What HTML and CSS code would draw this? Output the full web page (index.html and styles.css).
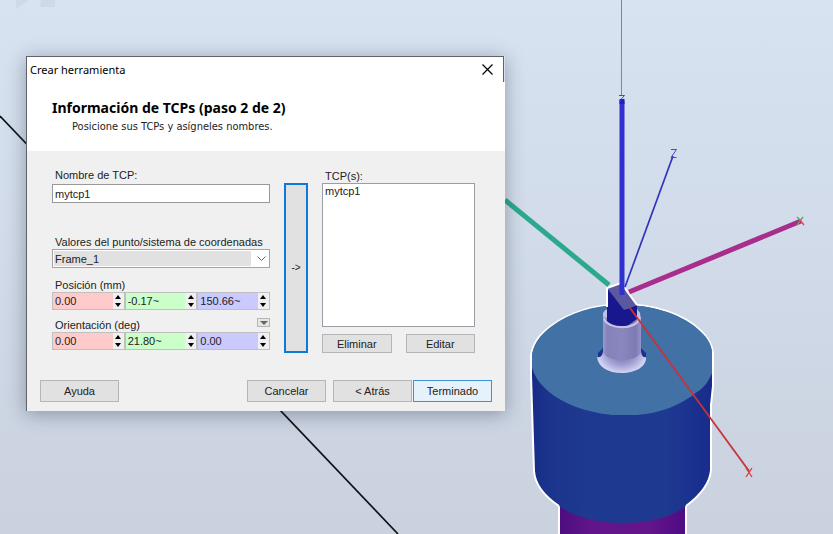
FILE: index.html
```html
<!DOCTYPE html>
<html lang="es">
<head>
<meta charset="utf-8">
<title>Crear herramienta</title>
<link rel="stylesheet" href="styles.css">
</head>
<body>
<main class="viewport">
  <svg class="scene" viewBox="0 0 833 534" preserveAspectRatio="xMinYMin slice" aria-hidden="true">
    <defs>
      <linearGradient id="body" x1="0" x2="1" y1="0" y2="0">
        <stop offset="0" stop-color="#172a86"/><stop offset=".08" stop-color="#1b338c"/><stop offset=".3" stop-color="#1e3990"/>
        <stop offset=".75" stop-color="#1e3990"/><stop offset="1" stop-color="#182b8c"/>
      </linearGradient>
      <linearGradient id="base" x1="0" x2="1" y1="0" y2="0">
        <stop offset="0" stop-color="#4c0d7e"/><stop offset=".25" stop-color="#62158a"/>
        <stop offset=".7" stop-color="#65158a"/><stop offset="1" stop-color="#4d0c84"/>
      </linearGradient>
      <linearGradient id="neck" x1="0" x2="1" y1="0" y2="0">
        <stop offset="0" stop-color="#9a98cb"/><stop offset=".12" stop-color="#8482b8"/><stop offset=".5" stop-color="#8987bd"/>
        <stop offset=".85" stop-color="#7d7bb2"/><stop offset="1" stop-color="#9694c8"/>
      </linearGradient>
      <radialGradient id="flare" gradientUnits="userSpaceOnUse" cx="0" cy="0" r="1" gradientTransform="translate(622 352) scale(25 21)">
        <stop offset=".4" stop-color="#8987bd"/><stop offset=".7" stop-color="#aaa8d8"/><stop offset="1" stop-color="#d3d2f4"/>
      </radialGradient>
    </defs>
    <path d="M16 0h13L16 9zM41 0h14v7H40z" fill="#cbd6e3" opacity=".7"/>
    <path d="M0 116L398 534" stroke="#101316" stroke-width="1.7"/>
    <path d="M621 0H622V96H621z" fill="#747de6"/>

    <path d="M559 504V536H686V504z" fill="url(#base)" stroke="#fff" stroke-width="2"/>
    <path d="M531 355C533 343 539 335 551 326C569 313 592 305 622 304C655 304 685 315 701 331C709 339 712 346 713 354V386L711 405V470C710 483 702 494 686 506C670 518 648 523 622 523C596 523 575 517 559 506C544 496 535 484 534 471L533 440L531 385z" fill="url(#body)"/>
    <path d="M559 506C544 496 535 484 534 471L533 440L531 375V355C533 343 539 335 551 326C569 313 592 305 622 304C655 304 685 315 701 331C709 339 713 346 713 354V386L711 405V470C710 483 702 494 686 506" fill="none" stroke="#fff" stroke-width="2"/>
    <path d="M532 355C534 343 540 335 552 326C570 313 592 305 622 305C655 305 684 315 700 331C709 339 712 346 712 354V373C708 382 704 388 697 392C681 405 661 413 637 415H612C585 412 563 404 548 391C540 384 534 376 532 367z" fill="#4171a5"/>

    <path d="M603 348L598 353V358L605 361zM641 348L646 353V358L637 361z" fill="#1c318d"/>
    <path d="M597 357C601 358 603 355 603 350H641C641 355 643 358 646 357C647 366 636 373 622 373C608 373 598 367 597 357z" fill="url(#flare)"/>
    <path d="M603 316C602 309 611 306 622 306C634 306 642 311 641 319V353Q636 360 622 360Q608 360 603 353z" fill="url(#neck)"/>
    <path d="M604 318C606 330 638 331 640 317" fill="none" stroke="#c5c4eb" stroke-width="2"/>
    <path d="M603 317V314Q603 311 608 309V318zM637 309L640 313V320L637 322z" fill="#c0bfe7"/>
    <path d="M607 288L627 309L637 305V319C628 325 630 326 622 326Q612 326 607 321z" fill="#19178e"/>
    <path d="M607 288L621 283L637 305L624 310z" fill="#5a58a1"/>
    <path d="M607 307V288L621 283L637 305" fill="none" stroke="#fff" stroke-width="2"/>

    <path d="M505 200L609 285" stroke="#2ca98c" stroke-width="5"/>
    <path d="M629 292L801 221" stroke="#a92d8d" stroke-width="5"/>
    <path d="M625 287L673 156" stroke="#3333bc" stroke-width="1.7"/>
    <path d="M622 101V295" stroke="#302fd0" stroke-width="5"/>
    <path d="M619.500 99H624.500V104H619.500z" fill="#2020c0"/>
    <path d="M619 95.500H624.500L619.500 101" fill="none" stroke="#4046e8" stroke-width="1"/>
    <path d="M671 149.500H676.500L671 157.500H676.500" fill="none" stroke="#4046e8" stroke-width="1"/>
    <path d="M630 308L749 471" stroke="#c83238" stroke-width="1.8"/>
    <path d="M746 468L752 477M752 468L746 477" stroke="#e42c38" stroke-width="1.2"/>
    <path d="M797 217L800 220M803 217L800 221L797 225" fill="none" stroke="#57a957" stroke-width="1.3"/>
    <path d="M800 220L804 225" stroke="#dd453f" stroke-width="1.3"/>
  </svg>

  <section class="dialog" role="dialog" aria-labelledby="dialog-title">
    <header class="titlebar">
      <span id="dialog-title">Crear herramienta</span>
      <button class="close" type="button" aria-label="Cerrar">
        <svg viewBox="0 0 11 11" width="11" height="11"><path d="M.5.5l10 10M10.500.5l-10 10" stroke="#000" stroke-width="1.200"/></svg>
      </button>
    </header>
    <div class="intro">
      <h1>Información de TCPs (paso 2 de 2)</h1>
      <p>Posicione sus TCPs y asígneles nombres.</p>
    </div>
    <form class="form">
      <div class="columns">
        <div class="values">
          <div class="field name">
            <label for="tcp-name">Nombre de TCP:</label>
            <input id="tcp-name" class="textbox" type="text" value="mytcp1">
          </div>
          <div class="field frame">
            <label for="frame">Valores del punto/sistema de coordenadas</label>
            <div class="combo">
              <select id="frame"><option>Frame_1</option></select>
              <svg class="chevron" viewBox="0 0 9 5" width="9" height="5"><path d="M.5.5l4 4 4-4" fill="none" stroke="#666"/></svg>
            </div>
          </div>
          <div class="field position" role="group" aria-labelledby="position-label">
            <span id="position-label" class="label">Posición (mm)</span>
            <div class="triple">
              <div class="spin x"><input type="text" aria-label="X" value="0.00"><span class="steps"><button type="button" class="up" aria-label="Aumentar X"></button><button type="button" class="down" aria-label="Reducir X"></button></span></div>
              <div class="spin y"><input type="text" aria-label="Y" value="-0.17~"><span class="steps"><button type="button" class="up" aria-label="Aumentar Y"></button><button type="button" class="down" aria-label="Reducir Y"></button></span></div>
              <div class="spin z"><input type="text" aria-label="Z" value="150.66~"><span class="steps"><button type="button" class="up" aria-label="Aumentar Z"></button><button type="button" class="down" aria-label="Reducir Z"></button></span></div>
            </div>
          </div>
          <div class="field" role="group" aria-labelledby="orientation-label">
            <div class="label-row">
              <span id="orientation-label" class="label">Orientación (deg)</span>
              <button type="button" class="more" aria-label="Opciones de orientación"></button>
            </div>
            <div class="triple">
              <div class="spin x"><input type="text" aria-label="RX" value="0.00"><span class="steps"><button type="button" class="up" aria-label="Aumentar RX"></button><button type="button" class="down" aria-label="Reducir RX"></button></span></div>
              <div class="spin y"><input type="text" aria-label="RY" value="21.80~"><span class="steps"><button type="button" class="up" aria-label="Aumentar RY"></button><button type="button" class="down" aria-label="Reducir RY"></button></span></div>
              <div class="spin z"><input type="text" aria-label="RZ" value="0.00"><span class="steps"><button type="button" class="up" aria-label="Aumentar RZ"></button><button type="button" class="down" aria-label="Reducir RZ"></button></span></div>
            </div>
          </div>
        </div>
        <button class="button transfer" type="button">-&gt;</button>
        <div class="tcps">
          <label for="tcp-list">TCP(s):</label>
          <select id="tcp-list" class="list" size="10"><option>mytcp1</option></select>
          <div class="list-actions">
            <button class="button" type="button">Eliminar</button>
            <button class="button" type="button">Editar</button>
          </div>
        </div>
      </div>
      <footer class="footer">
        <button class="button help" type="button">Ayuda</button>
        <button class="button cancel" type="button">Cancelar</button>
        <button class="button" type="button">&lt; Atrás</button>
        <button class="button primary" type="button">Terminado</button>
      </footer>
    </form>
  </section>
</main>
</body>
</html>
```
FILE: styles.css
```css
* { box-sizing: border-box; }

body {
  margin: 0;
  font: 11px/14px "Liberation Sans", Arial, sans-serif;
  color: #222;
}

button, input, select { font: inherit; color: inherit; margin: 0; }

.viewport {
  position: relative;
  display: flex;
  align-items: flex-start;
  min-height: 100vh;
  padding: 56px 26px;
  overflow: hidden;
  background: linear-gradient(#d7e3f1, #cad1df);
}

.scene {
  position: absolute;
  inset: 0;
  width: 100%;
  height: 100%;
}

.dialog {
  position: relative;
  width: 479px;
  max-width: 100%;
  border-left: 1px solid #5f6266;
  box-shadow: 0 3px 18px rgba(30, 40, 60, 0.38);
}

.titlebar {
  display: flex;
  justify-content: space-between;
  align-items: center;
  height: 26px;
  margin-right: 1px;
  padding: 0 10px 0 3px;
  border: solid #5f6266;
  border-width: 1px 1px 0 0;
  background: #fff;
  color: #000;
  font: 11px/16px "Noto Sans", "Segoe UI", sans-serif;
}

.close {
  display: flex;
  padding: 0;
  border: 0;
  background: none;
}

.intro {
  padding: 17px 25px 16px;
  background: #fff;
}

.intro h1 {
  margin: 0;
  color: #000;
  font: bold 14px/18px "Noto Sans", Tahoma, sans-serif;
}

.intro p {
  margin: 0;
  padding: 2px 0 0 20px;
  font: 11px/16px "DejaVu Sans Condensed", Tahoma, sans-serif;
}

.form {
  padding: 17px 13px 9px;
  background: #f0f0f0;
}

.columns {
  display: grid;
  grid-template-columns: 218px 24px 153px;
  column-gap: 14px;
  padding-left: 12px;
}

.field, .tcps { display: flex; flex-direction: column; }
.field label, .label, .tcps label { padding-left: 3px; }

.name { gap: 2px; margin-bottom: 32px; }
.frame { margin-bottom: 10px; }
.position { margin-bottom: 8px; }

.textbox {
  width: 100%;
  height: 19px;
  padding: 0 2px;
  border: 1px solid #999;
  background: #fff;
}

.combo { position: relative; display: flex; }

.combo select {
  appearance: none;
  width: 100%;
  height: 19px;
  padding: 0 18px 0 2px;
  border: 1px solid #a5a5a5;
  border-radius: 0;
  background: linear-gradient(#e1e1e1, #e1e1e1) 1px 1px / calc(100% - 19px) calc(100% - 2px) no-repeat #fff;
}

.chevron {
  position: absolute;
  top: 7px;
  right: 4px;
  pointer-events: none;
}

.label-row {
  display: flex;
  justify-content: space-between;
  align-items: flex-start;
}

.more {
  display: flex;
  justify-content: center;
  align-items: center;
  width: 13px;
  height: 9px;
  padding: 0;
  border: 1px solid #b5b5b5;
  background: #e6e6e6;
}

.more::before {
  content: "";
  border: solid transparent;
  border-width: 4px 4px 0;
  border-top-color: #666;
}

.triple { display: grid; grid-template-columns: repeat(3, minmax(0, 1fr)); }

.spin {
  display: flex;
  height: 18px;
  border: 1px solid #c0c0c0;
  background: var(--tint);
}

.spin.x { --tint: #ffcaca; }
.spin.y { --tint: #caffca; }
.spin.z { --tint: #cacaff; }

.spin input {
  flex: 1;
  min-width: 0;
  padding: 0 2px;
  border: 0;
  background: none;
}

.steps { display: grid; grid-template-rows: 1fr 1fr; width: 11px; }

.steps button {
  display: flex;
  justify-content: center;
  align-items: center;
  padding: 0;
  border: 0;
  background: #f0f0f0;
}

.steps button::before { content: ""; border: solid transparent; }
.steps .up::before { border-width: 0 3px 4px; border-bottom-color: #000; }
.steps .down::before { border-width: 4px 3px 0; border-top-color: #000; }

.button {
  padding: 0;
  border: 1px solid #b5b5b5;
  border-radius: 0;
  background: #e1e1e1;
}

.transfer {
  margin-top: 15px;
  border: 2px solid #0a7bd8;
  font-size: 10px;
}

.tcps { padding-top: 1px; }

.list {
  width: 100%;
  height: 144px;
  padding: 0;
  border: 1px solid #9b9da5;
  border-radius: 0;
  background: #fff;
  overflow: hidden;
}

.list option { min-height: 0; padding: 1px 2px; line-height: 14px; }

.list-actions {
  display: grid;
  grid-template-columns: 1fr 1fr;
  gap: 14px;
  padding-top: 7px;
}

.list-actions .button { height: 19px; }

.footer {
  display: flex;
  padding-top: 27px;
}

.footer .button { width: 79px; height: 22px; }
.footer .help { margin-right: auto; }
.footer .cancel { margin-right: 7px; }

.footer .primary {
  margin-left: 1px;
  border-color: #3d92d8;
  background: #e5f1fb;
}
```
